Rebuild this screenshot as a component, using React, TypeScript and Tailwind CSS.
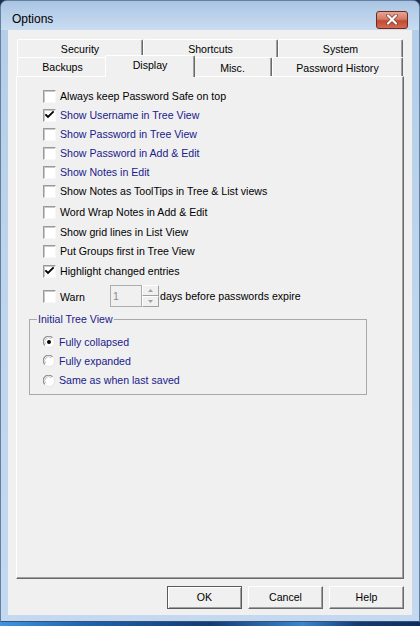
import React from "react";

const BLUE = "text-[#20208a]";

function CheckBox({ checked }: { checked?: boolean }) {
  return (
    <span className="relative block w-[13px] h-[13px] shrink-0 bg-white border border-t-[#9a9a9a] border-l-[#9a9a9a] border-r-[#f7f7f7] border-b-[#f7f7f7] shadow-[inset_1px_1px_0_#c8c8c8]">
      {checked && (
        <svg width="11" height="11" viewBox="0 0 11 11" className="absolute left-0 top-0">
          <path d="M2 5 L4 7 L9 2" stroke="#000" strokeWidth="1.8" fill="none" strokeLinecap="square" />
        </svg>
      )}
    </span>
  );
}

function Radio({ checked }: { checked?: boolean }) {
  return (
    <svg width="12" height="12" viewBox="0 0 12 12" className="shrink-0">
      <circle cx="6" cy="6" r="5.5" fill="#fff" />
      <path d="M1.8 9.4 A5.2 5.2 0 0 1 9.4 1.8" stroke="#8a8a8a" strokeWidth="1.1" fill="none" />
      <path d="M2.9 8.3 A3.7 3.7 0 0 1 8.3 2.9" stroke="#c4c4c4" strokeWidth="1" fill="none" />
      <path d="M10 2.4 A5.2 5.2 0 0 1 2.4 10" stroke="#e6e6e6" strokeWidth="1" fill="none" />
      {checked && <circle cx="6" cy="6" r="2" fill="#000" />}
    </svg>
  );
}

const rows: { label: string; blue?: boolean; checked?: boolean; cls: string }[] = [
  { label: "Always keep Password Safe on top", cls: "h-[19px]" },
  { label: "Show Username in Tree View", blue: true, checked: true, cls: "h-[19px]" },
  { label: "Show Password in Tree View", blue: true, cls: "h-[19px]" },
  { label: "Show Password in Add & Edit", blue: true, cls: "h-[19px]" },
  { label: "Show Notes in Edit", blue: true, cls: "h-[19px]" },
  { label: "Show Notes as ToolTips in Tree & List views", cls: "h-[19px]" },
  { label: "Word Wrap Notes in Add & Edit", cls: "h-[19px] mt-[2px]" },
  { label: "Show grid lines in List View", cls: "h-[19px] mt-[1px]" },
  { label: "Put Groups first in Tree View", cls: "h-[19px]" },
  { label: "Highlight changed entries", checked: true, cls: "h-[19px] mt-[1px]" },
];

function Tab({ label, w }: { label: string; w: string }) {
  return (
    <div
      className={`${w} h-full flex items-center justify-center pt-[2px] bg-[#f0f0f0] border-l border-t border-white border-r border-r-[#696969] rounded-t-[2px] shadow-[inset_-1px_0_0_#a0a0a0]`}
    >
      {label}
    </div>
  );
}

function Btn({ label, def }: { label: string; def?: boolean }) {
  return (
    <div
      className={`w-[75px] h-[23px] flex items-center justify-center bg-[#f0f0f0] border ${
        def
          ? "border-[#5a5a5a] shadow-[inset_1px_1px_0_#fff,inset_-1px_-1px_0_#a0a0a0]"
          : "border-t-white border-l-white border-r-[#696969] border-b-[#696969] shadow-[inset_-1px_-1px_0_#a0a0a0]"
      }`}
    >
      {label}
    </div>
  );
}

export default function App() {
  return (
    <div className="w-[420px] h-[626px] bg-[#1c2f4c] flex flex-col font-['Liberation_Sans','Arial',sans-serif] text-[10.6px] text-black leading-none">
      <div className="flex flex-col rounded-t-[7px] border border-[#62809f] border-b-[#34537a] bg-[linear-gradient(180deg,#b4cce7_0%,#bed4ec_40%,#c4d9ef_100%)]">
        {/* title bar */}
        <div className="h-[29px] flex items-center justify-between pl-[11px] pr-[11px] bg-[linear-gradient(180deg,#a9c4e3_0%,#b9d0ea_45%,#c9dcf0_100%)] rounded-t-[6px]">
          <span className="text-[12px] mt-[6px]">Options</span>
          <div className="w-[32px] h-[18px] mt-[8px] rounded-[3px] border border-[#6d2a20] bg-[linear-gradient(180deg,#e8a593_0%,#d47a66_45%,#c24a34_55%,#d56a4e_100%)] flex items-center justify-center">
            <svg width="12" height="11" viewBox="0 0 12 11">
              <path d="M2 1.5 L10 9.5 M10 1.5 L2 9.5" stroke="#7a3a30" strokeWidth="3.6" strokeLinecap="round" />
              <path d="M2 1.5 L10 9.5 M10 1.5 L2 9.5" stroke="#fff" strokeWidth="2.2" strokeLinecap="round" />
            </svg>
          </div>
        </div>

        {/* client */}
        <div className="mx-[7px] h-[585px] bg-[#f0f0f0] flex flex-col">
          <div className="ml-[8px] mt-[9px] w-[388px] flex flex-col">
            {/* tab row 1 */}
            <div className="h-[18px] flex pl-[1px]">
              <Tab label="Security" w="w-[126px]" />
              <Tab label="Shortcuts" w="w-[135px]" />
              <Tab label="System" w="w-[125px]" />
            </div>
            {/* tab row 2 */}
            <div className="h-[19px] flex items-end pl-[1px]">
              <div className="w-[90px] h-[19px] flex items-center justify-center pt-[1px] bg-[#f0f0f0] border-l border-t border-white">
                Backups
              </div>
              <div className="relative z-10 w-[90px] h-[22px] -mx-[2px] -mb-[1px] pb-[2px] flex items-center justify-center bg-[#f0f0f0] border-l border-t border-white border-r border-r-[#696969] rounded-t-[2px] shadow-[inset_-1px_0_0_#a0a0a0]">
                Display
              </div>
              <Tab label="Misc." w="w-[79px]" />
              <Tab label="Password History" w="w-[131px]" />
            </div>
            {/* panel */}
            <div className="h-[503px] bg-[#f0f0f0] border border-t-white border-l-white border-r-[#696969] border-b-[#696969] shadow-[inset_-1px_-1px_0_#a0a0a0] flex flex-col pt-[10px]">
              {rows.map((r) => (
                <div key={r.label} className={`${r.cls} ml-[26px] flex items-center gap-[4px]`}>
                  <CheckBox checked={r.checked} />
                  <span className={r.blue ? BLUE : ""}>{r.label}</span>
                </div>
              ))}
              {/* warn row */}
              <div className="ml-[26px] mt-[4px] h-[22px] flex items-center">
                <CheckBox />
                <span className="ml-[4px] w-[50px] mt-[2px]">Warn</span>
                <div className="w-[32px] h-[22px] border border-[#adadad] bg-[#f0f0f0] flex items-center pl-[2px] text-[#8a8a8a]">
                  1
                </div>
                <div className="w-[17px] h-[22px] flex flex-col">
                  <div className="h-[11px] flex items-center justify-center bg-[#f0f0f0] border border-t-white border-l-white border-r-[#a0a0a0] border-b-[#a0a0a0]">
                    <svg width="5" height="3" viewBox="0 0 5 3">
                      <path d="M0 3 L2.5 0 L5 3 Z" fill="#a0a0a0" />
                    </svg>
                  </div>
                  <div className="h-[11px] flex items-center justify-center bg-[#f0f0f0] border border-t-white border-l-white border-r-[#a0a0a0] border-b-[#a0a0a0]">
                    <svg width="5" height="3" viewBox="0 0 5 3">
                      <path d="M0 0 L2.5 3 L5 0 Z" fill="#a0a0a0" />
                    </svg>
                  </div>
                </div>
                <span className="ml-[1px]">days before passwords expire</span>
              </div>
              {/* group box */}
              <fieldset className="ml-[12px] mt-[7px] w-[338px] border border-[#a9a9a9] pl-[7px] pb-[3px]">
                <legend className={`px-[1px] ${BLUE}`}>Initial Tree View</legend>
                <div className="flex flex-col pl-[6px] pt-[8px]">
                  <div className="h-[19px] flex items-center gap-[4px]">
                    <Radio checked />
                    <span className={BLUE}>Fully collapsed</span>
                  </div>
                  <div className="h-[19px] flex items-center gap-[4px]">
                    <Radio />
                    <span className={BLUE}>Fully expanded</span>
                  </div>
                  <div className="h-[20px] flex items-center gap-[4px]">
                    <Radio />
                    <span className={BLUE}>Same as when last saved</span>
                  </div>
                </div>
              </fieldset>
            </div>
          </div>
          {/* buttons */}
          <div className="mt-[7px] h-[23px] flex justify-end gap-[6px] pr-[8px]">
            <Btn label="OK" def />
            <Btn label="Cancel" />
            <Btn label="Help" />
          </div>
        </div>
        <div className="h-[6px]" />
      </div>
      <div className="h-[4px] bg-[linear-gradient(90deg,#3f95e0_0%,#1f63b0_20%,#143a72_50%,#3a86cf_72%,#143a72_85%,#0f2d5c_100%)]" />
    </div>
  );
}
